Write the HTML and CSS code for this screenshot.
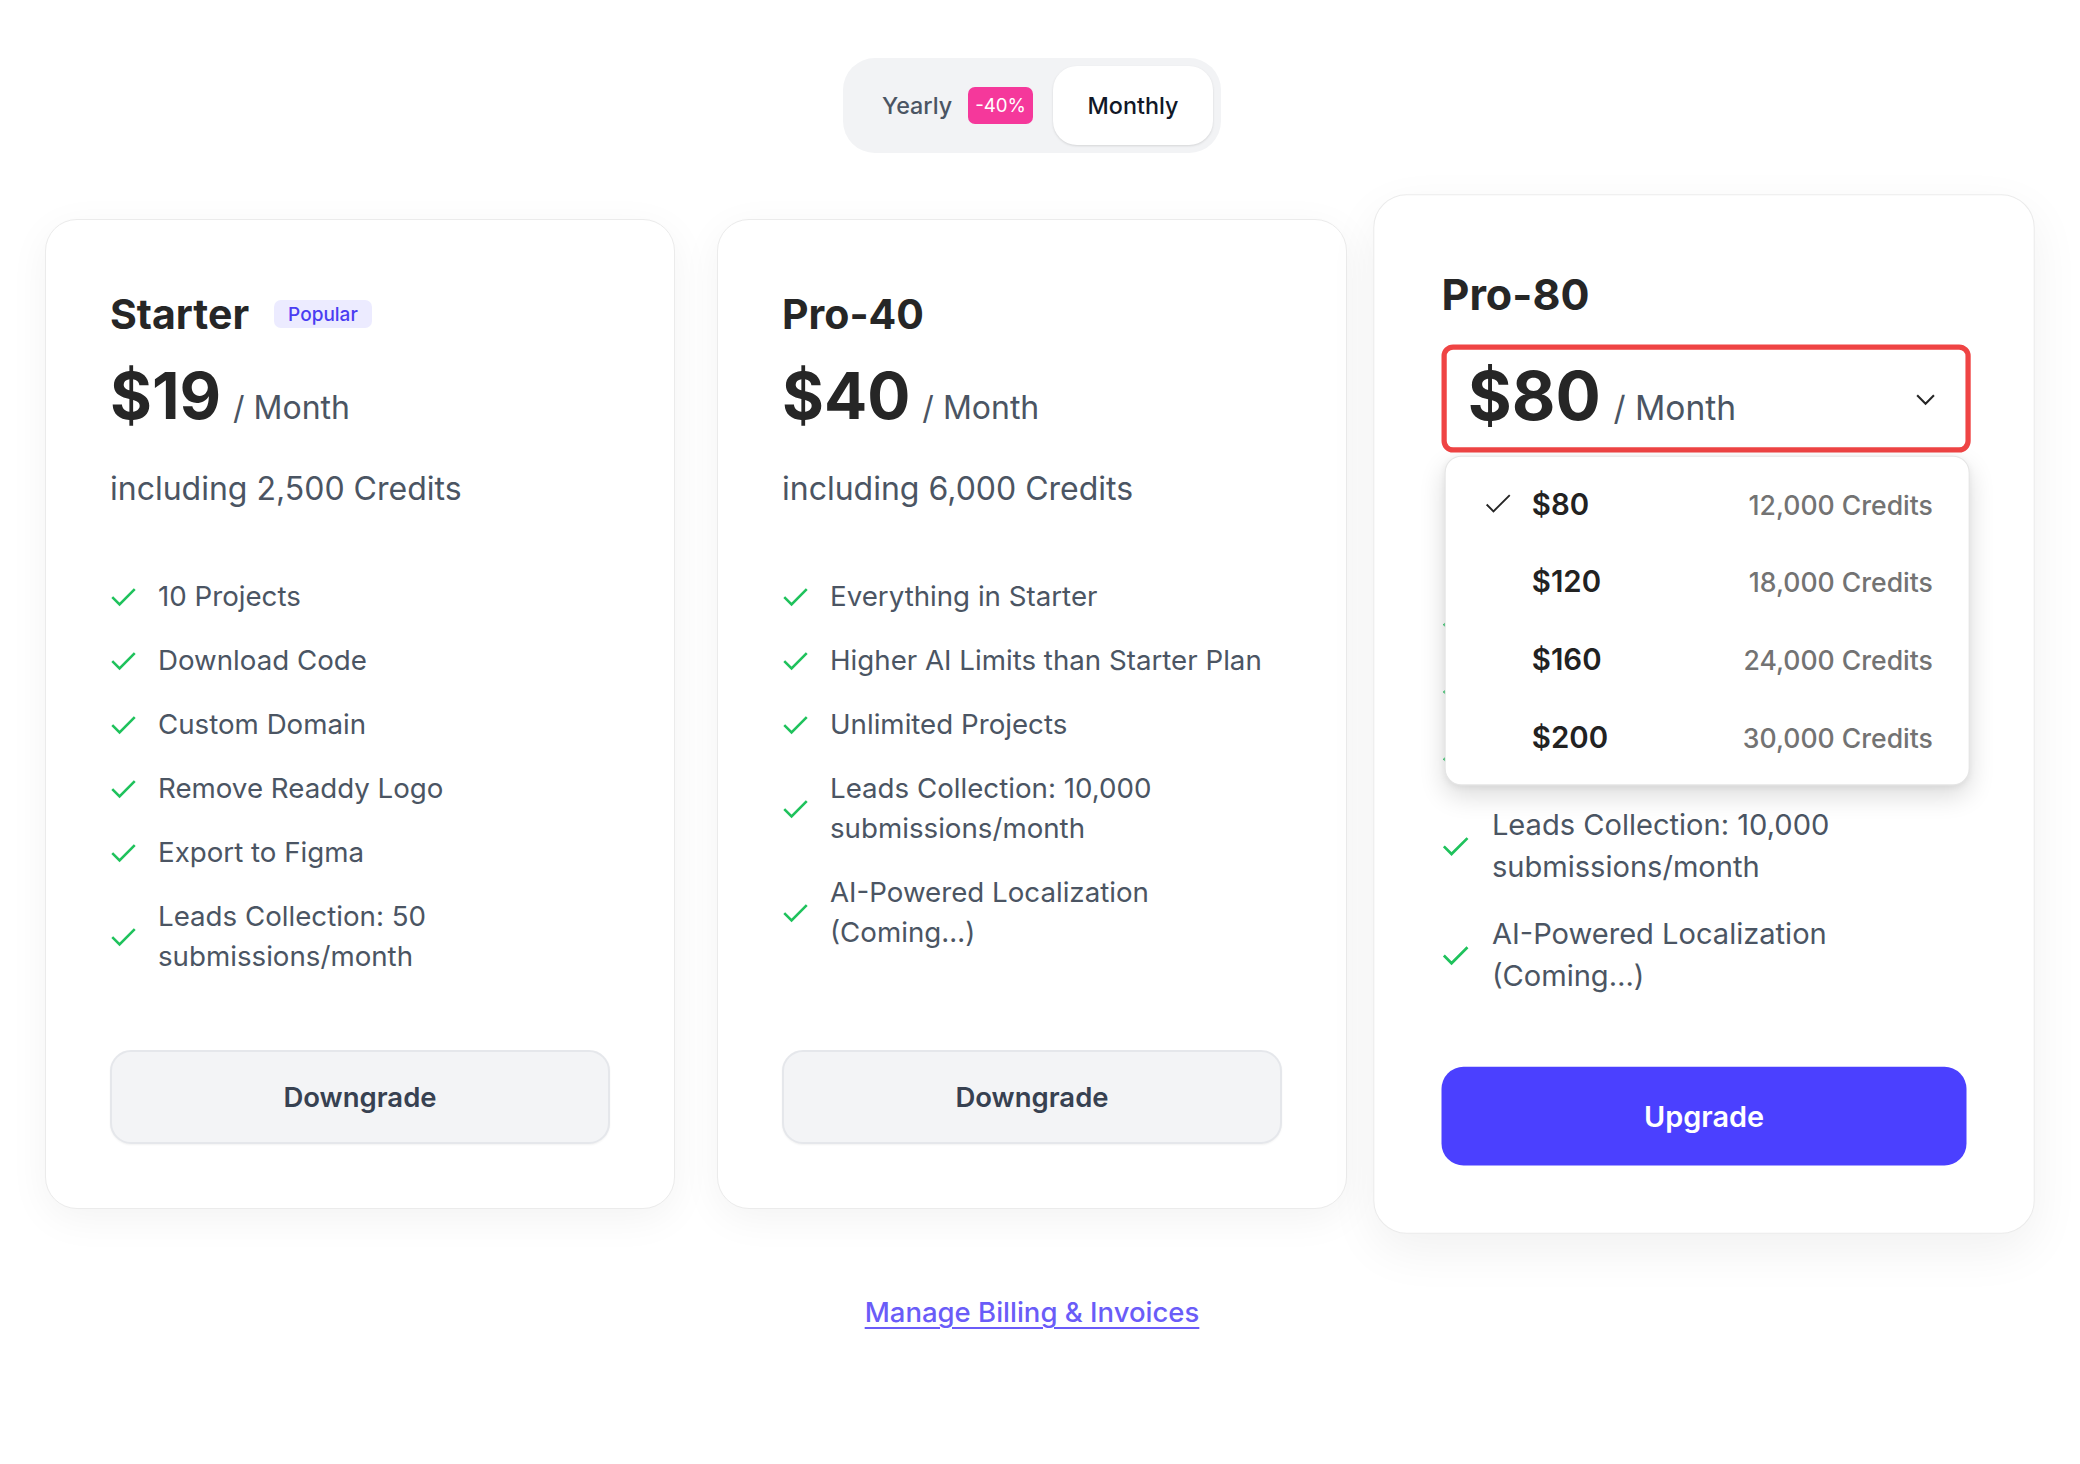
FILE: index.html
```html
<!DOCTYPE html>
<html lang="en">
<head>
<meta charset="utf-8">
<title>Pricing</title>
<link rel="stylesheet" href="styles.css">
</head>
<body>
<main class="page">
  <div class="billing-toggle">
    <button class="toggle-option toggle-yearly">Yearly <span class="discount">-40%</span></button>
    <button class="toggle-option toggle-monthly">Monthly</button>
  </div>

  <section class="plans">
    <article class="plan">
      <div class="plan-title"><h2>Starter</h2><span class="tag">Popular</span></div>
      <div class="price"><span class="amount">$19</span><span class="period">/ Month</span></div>
      <p class="credits">including 2,500 Credits</p>
      <ul class="features">
        <li><svg class="check" viewBox="0 0 24 24"><polyline points="2,12.5 8.5,19 22,5.5"/></svg><span>10 Projects</span></li>
        <li><svg class="check" viewBox="0 0 24 24"><polyline points="2,12.5 8.5,19 22,5.5"/></svg><span>Download Code</span></li>
        <li><svg class="check" viewBox="0 0 24 24"><polyline points="2,12.5 8.5,19 22,5.5"/></svg><span>Custom Domain</span></li>
        <li><svg class="check" viewBox="0 0 24 24"><polyline points="2,12.5 8.5,19 22,5.5"/></svg><span>Remove Readdy Logo</span></li>
        <li><svg class="check" viewBox="0 0 24 24"><polyline points="2,12.5 8.5,19 22,5.5"/></svg><span>Export to Figma</span></li>
        <li><svg class="check" viewBox="0 0 24 24"><polyline points="2,12.5 8.5,19 22,5.5"/></svg><span>Leads Collection: 50 submissions/month</span></li>
      </ul>
      <button class="cta cta-secondary">Downgrade</button>
    </article>

    <article class="plan">
      <div class="plan-title"><h2>Pro-40</h2></div>
      <div class="price"><span class="amount">$40</span><span class="period">/ Month</span></div>
      <p class="credits">including 6,000 Credits</p>
      <ul class="features">
        <li><svg class="check" viewBox="0 0 24 24"><polyline points="2,12.5 8.5,19 22,5.5"/></svg><span>Everything in Starter</span></li>
        <li><svg class="check" viewBox="0 0 24 24"><polyline points="2,12.5 8.5,19 22,5.5"/></svg><span>Higher AI Limits than Starter Plan</span></li>
        <li><svg class="check" viewBox="0 0 24 24"><polyline points="2,12.5 8.5,19 22,5.5"/></svg><span>Unlimited Projects</span></li>
        <li><svg class="check" viewBox="0 0 24 24"><polyline points="2,12.5 8.5,19 22,5.5"/></svg><span>Leads Collection: 10,000 submissions/month</span></li>
        <li><svg class="check" viewBox="0 0 24 24"><polyline points="2,12.5 8.5,19 22,5.5"/></svg><span>AI-Powered Localization (Coming…)</span></li>
      </ul>
      <button class="cta cta-secondary">Downgrade</button>
    </article>

    <article class="plan plan-featured">
      <div class="plan-title"><h2>Pro-80</h2></div>
      <div class="price-select">
        <div class="price-trigger">
          <div class="price price-inline"><span class="amount">$80</span><span class="period">/ Month</span></div>
          <svg class="chevron" viewBox="0 0 26 26"><polyline points="5,9.5 13,17.5 21,9.5"/></svg>
        </div>
        <div class="dropdown">
          <div class="option"><svg class="opt-check" viewBox="0 0 28 28"><polyline points="3,14.5 9.5,21 25,5.5"/></svg><span class="opt-price">$80</span><span class="opt-credits">12,000 Credits</span></div>
          <div class="option"><span class="opt-spacer"></span><span class="opt-price">$120</span><span class="opt-credits">18,000 Credits</span></div>
          <div class="option"><span class="opt-spacer"></span><span class="opt-price">$160</span><span class="opt-credits">24,000 Credits</span></div>
          <div class="option"><span class="opt-spacer"></span><span class="opt-price">$200</span><span class="opt-credits">30,000 Credits</span></div>
        </div>
      </div>
      <ul class="features features-featured">
        <li><svg class="check" viewBox="0 0 24 24"><polyline points="2,12.5 8.5,19 22,5.5"/></svg><span>Everything in Starter</span></li>
        <li><svg class="check" viewBox="0 0 24 24"><polyline points="2,12.5 8.5,19 22,5.5"/></svg><span>Higher AI Limits than Starter Plan</span></li>
        <li><svg class="check" viewBox="0 0 24 24"><polyline points="2,12.5 8.5,19 22,5.5"/></svg><span>Unlimited Projects</span></li>
        <li><svg class="check" viewBox="0 0 24 24"><polyline points="2,12.5 8.5,19 22,5.5"/></svg><span>Leads Collection: 10,000 submissions/month</span></li>
        <li><svg class="check" viewBox="0 0 24 24"><polyline points="2,12.5 8.5,19 22,5.5"/></svg><span>AI-Powered Localization (Coming…)</span></li>
      </ul>
      <button class="cta cta-primary">Upgrade</button>
    </article>
  </section>

  <a class="billing-link" href="#">Manage Billing &amp; Invoices</a>
</main>
</body>
</html>
```

FILE: styles.css
```css
* { box-sizing: border-box; }

html, body {
  margin: 0;
  background: #ffffff;
}

body {
  font-family: Inter, "Noto Sans", sans-serif;
  color: #262626;
}

.page {
  display: flex;
  flex-direction: column;
  align-items: center;
  padding: 58px 61px 100px 45px;
}

/* Billing toggle */
.billing-toggle {
  display: flex;
  padding: 8px;
  background: #f2f3f5;
  border-radius: 32px;
}

.toggle-option {
  border: 0;
  background: none;
  font-family: inherit;
  font-size: 23.3px;
  font-weight: 500;
  height: 79px;
  display: flex;
  align-items: center;
  cursor: pointer;
}

.toggle-yearly {
  color: #4b5563;
  padding: 0 20px 0 31px;
  gap: 16px;
}

.discount {
  display: flex;
  align-items: center;
  height: 37px;
  padding: 0 7px;
  border-radius: 7px;
  background: #f5389b;
  color: #ffffff;
  font-size: 18.7px;
  font-weight: 400;
}

.toggle-monthly {
  width: 160px;
  justify-content: center;
  background: #ffffff;
  color: #111827;
  border-radius: 24px;
  box-shadow: 0 1px 3px rgba(0, 0, 0, 0.08), 0 1px 2px rgba(0, 0, 0, 0.05);
}

/* Plans */
.plans {
  width: 100%;
  display: grid;
  grid-template-columns: repeat(3, 1fr);
  gap: 42px;
  margin-top: 66px;
}

.plan {
  display: flex;
  flex-direction: column;
  background: #ffffff;
  border: 1px solid #ebebeb;
  border-radius: 32px;
  padding: 64px;
  box-shadow: 0 10px 40px rgba(0, 0, 0, 0.05);
}

.plan-featured {
  position: relative;
  z-index: 1;
  transform: scale(1.05);
  box-shadow: 0 16px 48px rgba(0, 0, 0, 0.06);
}

.plan-title {
  display: flex;
  align-items: center;
  gap: 25px;
  height: 60px;
}

.plan-title h2 {
  margin: 0;
  font-size: 41px;
  line-height: 60px;
  font-weight: 700;
  color: #262626;
}

.tag {
  display: flex;
  align-items: center;
  height: 28px;
  padding: 0 14px;
  border-radius: 7px;
  background: #ecebff;
  color: #4a3df2;
  font-size: 19px;
  font-weight: 500;
}

.price {
  display: flex;
  align-items: baseline;
  margin-top: 16px;
  line-height: 72px;
}

.amount {
  font-size: 64px;
  font-weight: 700;
  color: #262626;
}

.period {
  margin-left: 12px;
  font-size: 32px;
  color: #4b5563;
}

.credits {
  margin: 23px 0 0;
  font-size: 32px;
  line-height: 44px;
  color: #4b5563;
}

.features {
  list-style: none;
  margin: 65px 0 67px;
  padding: 0;
  display: flex;
  flex-direction: column;
  gap: 24px;
}

.features li {
  display: flex;
  align-items: center;
  gap: 21px;
  font-size: 27.7px;
  line-height: 40px;
  color: #4b5563;
}

.check {
  flex: none;
  width: 27px;
  height: 27px;
  fill: none;
  stroke: #1fc25c;
  stroke-width: 2.3;
}

.cta {
  margin-top: auto;
  width: 100%;
  height: 94px;
  border-radius: 21px;
  font-family: inherit;
  font-size: 27.5px;
  font-weight: 600;
  cursor: pointer;
}

.cta-secondary {
  background: #f3f4f6;
  border: 2px solid #e5e7eb;
  color: #374151;
  box-shadow: 0 1px 2px rgba(0, 0, 0, 0.05);
}

.cta-primary {
  background: #4b40ff;
  border: 0;
  color: #ffffff;
}

/* Featured price select */
.price-select {
  position: relative;
  margin-top: 18px;
}

.price-trigger {
  display: flex;
  align-items: center;
  height: 103px;
  margin: 0 -4px 0 0;
  padding: 6px 25px 0 20px;
  border: 5px solid #ef4444;
  border-radius: 11px;
}

.price-inline {
  margin-top: 0;
}

.chevron {
  margin-left: auto;
  margin-top: -6px;
  width: 26px;
  height: 26px;
  fill: none;
  stroke: #262626;
  stroke-width: 2;
}

.dropdown {
  position: absolute;
  top: calc(100% + 3px);
  left: 3px;
  right: -3px;
  z-index: 2;
  padding: 8px 0;
  background: #ffffff;
  border: 1px solid #e5e5e5;
  border-radius: 16px;
  box-shadow: 0 10px 24px rgba(0, 0, 0, 0.14), 0 2px 6px rgba(0, 0, 0, 0.05);
}

.option {
  display: flex;
  align-items: center;
  gap: 18px;
  height: 74px;
  padding: 0 34px 0 36px;
}

.opt-check,
.opt-spacer {
  flex: none;
  width: 28px;
  height: 28px;
}

.opt-check {
  fill: none;
  stroke: #262626;
  stroke-width: 1.8;
}

.opt-price {
  font-size: 28px;
  font-weight: 600;
  color: #222222;
}

.opt-credits {
  margin-left: auto;
  font-size: 25.3px;
  font-weight: 500;
  color: #737373;
}

.features-featured {
  margin-top: 142px;
}

/* Link */
.billing-link {
  margin-top: 83px;
  font-size: 27.5px;
  line-height: 40px;
  font-weight: 500;
  color: #6a5cf8;
  text-decoration: underline;
  text-decoration-thickness: 2px;
  text-underline-offset: 5px;
}
```
